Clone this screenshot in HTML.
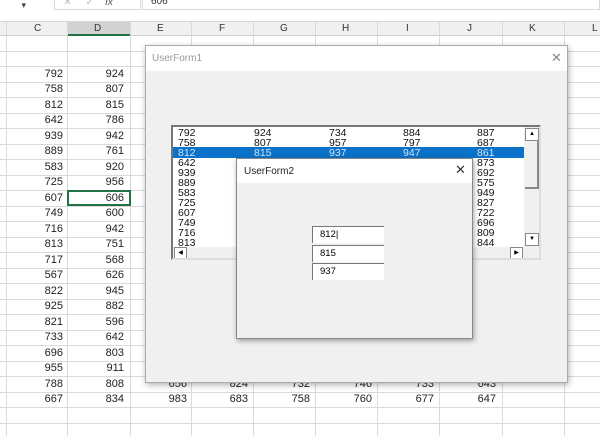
<!DOCTYPE html>
<html><head><style>
*{margin:0;padding:0;box-sizing:border-box}
html,body{width:600px;height:436px;overflow:hidden}
body{background:#fff;font-family:"Liberation Sans",sans-serif;position:relative}
.a{position:absolute}
.vl{position:absolute;top:22px;height:414px;width:1px;background:#dadada}
.hl{position:absolute;left:0;right:0;height:1px;background:#dadada}
.c{position:absolute;font-size:11px;color:#222;text-align:right;width:56px;line-height:15px}
.lb{position:absolute;font-size:10.5px;line-height:10px;color:#000}
.tb{position:absolute;left:312px;width:72px;height:17px;background:#fff;border-top:1px solid #777;border-left:1px solid #777;font-size:9.5px;padding-left:7px;line-height:16px}
</style></head><body>
<div class="a" style="left:0;top:0;width:600px;height:22px;background:#fff;border-bottom:1px solid #d4d4d4"></div>
<div class="a" style="left:0;top:0;width:40px;height:10px;font-size:9px;color:#444;text-align:right;padding-right:14px">▾</div>
<div class="a" style="left:54px;top:0;width:87px;height:10px;border:1px solid #d8d8d8;border-top:none;font-size:10px;color:#bbb;line-height:6px">&nbsp;&nbsp;&nbsp;✕&nbsp;&nbsp;&nbsp;&nbsp;&nbsp;✓&nbsp;&nbsp;&nbsp;&nbsp;<i style="color:#555">fx</i></div>
<div class="a" style="left:142px;top:0;width:458px;height:10px;border:1px solid #d8d8d8;border-top:none;font-size:10px;color:#333;line-height:4px;padding-left:8px">606</div>
<div class="a" style="left:0;top:22px;width:600px;height:14px;background:#f0f0f0;border-bottom:1px solid #d0d0d0"></div>
<div class="a" style="left:67px;top:22px;width:63px;height:14px;background:#d2d2d2;border-bottom:2px solid #217346"></div>
<div class="a" style="top:22px;left:0;width:600px;font-size:10px;color:#333;line-height:14px">
<span class="a" style="left:34px">C</span><span class="a" style="left:94px">D</span><span class="a" style="left:157px">E</span><span class="a" style="left:219px">F</span><span class="a" style="left:280px">G</span><span class="a" style="left:342px">H</span><span class="a" style="left:406px">I</span><span class="a" style="left:467px">J</span><span class="a" style="left:529px">K</span><span class="a" style="left:592px">L</span></div>
<div class="vl" style="left:6px"></div><div class="vl" style="left:67px"></div><div class="vl" style="left:130px"></div><div class="vl" style="left:191px"></div><div class="vl" style="left:253px"></div><div class="vl" style="left:315px"></div><div class="vl" style="left:377px"></div><div class="vl" style="left:439px"></div><div class="vl" style="left:502px"></div><div class="vl" style="left:564px"></div>
<div id="rows"></div>
<script>
var C=[[792,924],[758,807],[812,815],[642,786],[939,942],[889,761],[583,920],[725,956],[607,606],[749,600],[716,942],[813,751],[717,568],[567,626],[822,945],[925,882],[821,596],[733,642],[696,803],[955,911],[788,808,656,824,732,746,733,643],[667,834,983,683,758,760,677,647]];
var h='';var X=[6,67,130,191,253,315,377,439];
for(var i=0;i<26;i++){h+='<div class="hl" style="top:'+(35+15.5*(i+1))+'px"></div>';}
for(var i=0;i<C.length;i++){var t=35+15.5*(i+2);for(var j=0;j<C[i].length;j++){h+='<div class="c" style="left:'+(X[j]+1)+'px;top:'+(t+0.5)+'px">'+C[i][j]+'</div>';}}
h+='<div class="a" style="left:67px;top:190px;width:64px;height:16px;border:2px solid #217346"></div>';
document.getElementById('rows').innerHTML=h;
</script>
<div class="a" style="left:145px;top:45px;width:423px;height:338px;background:#f0f0f0;border:1px solid #aaa;box-shadow:1px 2px 6px rgba(0,0,0,.3)">
<div class="a" style="left:0;top:0;width:421px;height:25px;background:#fff"></div>
<div class="a" style="left:6px;top:7px;font-size:10px;color:#999">UserForm1</div>
<div class="a" style="left:405px;top:4px;font-size:13px;color:#888">✕</div>
</div>
<div class="a" style="left:171px;top:125px;width:370px;height:135px;background:#fff;border:2px solid #777;border-right-color:#ddd;border-bottom-color:#ddd;overflow:hidden">
<div class="a" style="left:0;top:20px;width:351px;height:11px;background:#0a72c9"></div>
<div id="lb"></div>
<div class="a" style="left:351px;top:0;width:16px;height:120px;background:#f0f0f0"><div class="a" style="left:1px;top:1px;width:14px;height:13px;background:#fff;border:1px solid #888;font-size:6px;text-align:center;line-height:11px">▲</div><div class="a" style="left:1px;top:14px;width:14px;height:48px;background:#f0f0f0;border-right:2px solid #888;border-bottom:2px solid #888"></div><div class="a" style="left:1px;top:106px;width:14px;height:13px;background:#fff;border:1px solid #888;font-size:6px;text-align:center;line-height:11px">▼</div></div>
<div class="a" style="left:0;top:120px;width:367px;height:13px;background:#f0f0f0"><div class="a" style="left:1px;top:0;width:13px;height:12px;background:#fff;border:1px solid #888;font-size:6px;line-height:10px;text-align:center">◀</div><div class="a" style="left:337px;top:0;width:13px;height:12px;background:#fff;border:1px solid #888;font-size:6px;line-height:10px;text-align:center">▶</div></div>
</div>
<script>
var L=[[792,924,734,884,887],[758,807,957,797,687],[812,815,937,947,861],[642,'','','',873],[939,'','','',692],[889,'','','',575],[583,'','','',949],[725,'','','',827],[607,'','','',722],[749,'','','',696],[716,'','','',809],[813,'','','',844]];
var XL=[5,81,156,230,304],s='';
for(var i=0;i<L.length;i++)for(var j=0;j<5;j++)s+='<div class="lb" style="left:'+XL[j]+'px;top:'+(1+i*10)+'px;color:'+(i==2?'#cfe3f7':'#111')+'">'+L[i][j]+'</div>';
document.getElementById('lb').innerHTML=s;
</script>
<div class="a" style="left:236px;top:158px;width:237px;height:181px;background:#f0f0f0;border:1px solid #888;box-shadow:1px 2px 5px rgba(0,0,0,.35)">
<div class="a" style="left:0;top:0;width:235px;height:24px;background:#fff"></div>
<div class="a" style="left:7px;top:7px;font-size:10px;color:#222">UserForm2</div>
<div class="a" style="left:218px;top:3px;font-size:13px;color:#333">✕</div>
</div>
<div class="tb" style="top:226px">812|</div>
<div class="tb" style="top:245px">815</div>
<div class="tb" style="top:263px">937</div>
</body></html>
